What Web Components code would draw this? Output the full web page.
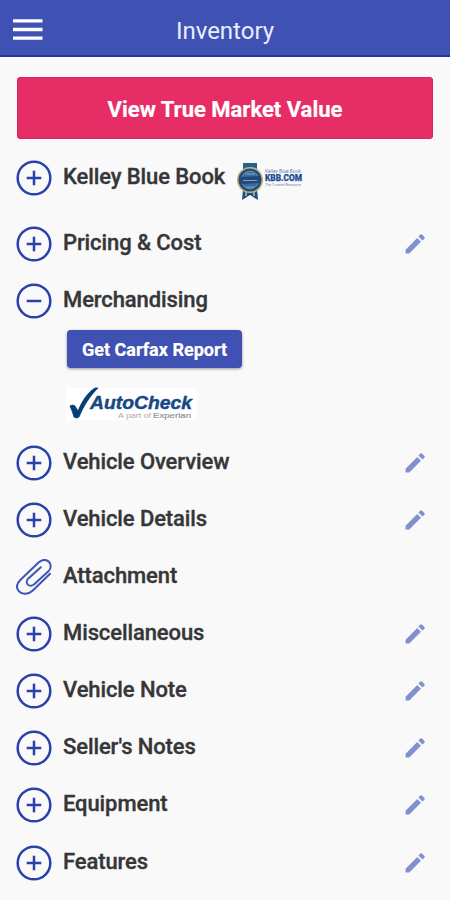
<!DOCTYPE html>
<html lang="en">
<head>
<meta charset="utf-8">
<title>Inventory</title>
<style>
html,body{margin:0;height:900px;overflow:hidden;background:#f9f9f9;font-family:Roboto,"Liberation Sans",sans-serif;color:#363638}
</style>
</head>
<body>
<inventory-page></inventory-page>
<script>
function define(name, html) {
  const t = document.createElement('template');
  t.innerHTML = html;
  customElements.define(name, class extends HTMLElement {
    constructor() {
      super();
      this.attachShadow({mode: 'open'}).append(t.content.cloneNode(true));
    }
  });
}

define('app-header', `<style>
:host{display:grid;grid-template-columns:60px 1fr 60px;align-items:center;height:57px;box-sizing:border-box;background:#3f51b2;border-bottom:2px solid #2635a0;color:#e9edff}
svg{display:block;margin:4px 0 0 12px}
h1{margin:6px 0 0;font-size:24px;line-height:28px;font-weight:400;text-align:center;white-space:nowrap}
</style><svg width="32" height="24" viewBox="0 0 32 24"><path d="M1 2.900H30.500M1 11.500H30.500M1 20.100H30.500" stroke="#fff" stroke-width="3.300"/></svg><h1><slot></slot></h1>`);

define('value-button', `<style>
:host{display:flex;align-items:center;justify-content:center;margin:20px 17px 6px;height:62px;box-sizing:border-box;padding-top:2px;border-radius:4px;background:#e72d66;box-shadow:inset 0 0 0 1px #e01f5d;color:#fff;font-size:22px;font-weight:700;white-space:nowrap;-webkit-text-stroke:.2px currentColor}
</style><span><slot></slot></span>`);

define('toggle-icon', `<style>
:host{display:block;width:36px;height:36px}
svg{display:block}
.clip,:host([kind=minus]) .v,:host([kind=clip]) .ring{display:none}
:host([kind=clip]) .clip{display:block}
</style><svg width="36" height="36" viewBox="0 0 36 36" fill="none" stroke="#2a41ac" stroke-width="2.500">
<g class="ring"><circle cx="18" cy="18" r="16.300"/><path d="M10.700 18H25.300"/><path class="v" d="M18 10.700V25.300"/></g>
<path class="clip" stroke-width="2" stroke="#3f55b5" stroke-linecap="round" stroke-linejoin="round" d="M34 14.800L16.800 31.500C12.700 35.500 6.200 36 3 32.300C0 28.800 .8 24.500 4.300 21L22.500 3.500C26 .3 30.300 .1 32.900 2.700C35.500 5.400 35.200 9.500 32.400 12.200L18.500 25C16.300 27 13.500 27.300 11.800 25.600C10.200 23.900 10.500 21.300 12.400 19.400L24.800 8.200"/></svg>`);

define('edit-icon', `<style>
:host{display:block;width:26px;height:26px}svg{display:block}
</style><svg width="26" height="26" viewBox="0 0 24 24" fill="#8290cd"><path d="M3.300 17.250V20.700h3.450L17.510 9.940l-3.450-3.450zM20.710 7.040a1 1 0 0 0 0-1.410l-2.340-2.340a1 1 0 0 0-1.410 0l-1.830 1.830 3.750 3.750 1.830-1.830z"/></svg>`);

define('inventory-row', `<style>
:host{display:flex;align-items:center;height:57.15px;padding:0 22px 0 16px;box-sizing:border-box}
:host([first]){height:66px;margin-bottom:4.400px}
h2{margin:0 0 2px 11px;font-size:22px;line-height:28px;font-weight:500;letter-spacing:-.1px;-webkit-text-stroke:.35px currentColor;white-space:nowrap}
:host([first]) h2{margin-bottom:3px}
slot[name=logo]{display:block;margin-left:11px}
slot[name=action]{display:block;margin-left:auto}
</style><slot name="icon"></slot><h2><slot></slot></h2><slot name="logo"></slot><slot name="action"></slot>`);

define('kbb-logo', `<style>
:host{display:block;margin-top:8px}svg{display:block}
</style><svg width="68" height="40" viewBox="0 0 68 40">
<path d="M7 1H21V12H7z" fill="#285f91"/><path d="M7 27L6 38L14 33L22 38L21 27z" fill="#234d76"/><path d="M10 30V34M18 30V34" stroke="#aebfc8" stroke-width="1.500"/>
<circle cx="14" cy="18" r="12.300" fill="#214e83" stroke="#c1b778" stroke-width="1.500"/>
<circle cx="14" cy="18" r="8.700" fill="#376ba0" stroke="#768e91" stroke-width="1"/>
<path d="M3 15L25 14V21L3 22z" fill="#214977"/><path d="M7 18.500H21M9 12H19M10 25H18" stroke="#83a4bd" stroke-width="1.200"/>
<g font-family="Roboto,Liberation Sans,sans-serif"><text x="29" y="11" font-size="5.200" textLength="36" lengthAdjust="spacingAndGlyphs" fill="#6484b4">Kelley Blue Book</text><text x="29" y="18.800" font-size="8.700" font-weight="900" textLength="37" lengthAdjust="spacingAndGlyphs" fill="#1f4c94" stroke="#1f4c94" stroke-width=".25">KBB.COM</text><text x="29" y="23.500" font-size="4" textLength="36" lengthAdjust="spacingAndGlyphs" fill="#6888b0">The Trusted Resource</text></g></svg>`);

define('auto-check', `<style>
:host{display:block;width:131px;height:32px;background:#fff}svg{display:block;overflow:visible}
</style><svg width="131" height="32" viewBox="0 0 131 32"><path d="M4 18Q7 16 9 18L12 23C16 13 22 4 29 0L32 0C24 8 18 17 13 29Q10 31 8 29Q6 22 4 18z" fill="#073d78" stroke="#073d78" stroke-width=".8"/>
<g font-family="Liberation Sans,sans-serif"><text x="24" y="21.300" font-size="17.500" font-style="italic" font-weight="700" textLength="102" lengthAdjust="spacingAndGlyphs" fill="#164884" stroke="#164884" stroke-width=".4">AutoCheck</text>
<text x="52" y="30.400" font-size="8" textLength="33" lengthAdjust="spacingAndGlyphs" fill="#aaa">A part of</text><text x="87" y="30.400" font-size="8" textLength="38" lengthAdjust="spacingAndGlyphs" fill="#929292" stroke="#929292" stroke-width=".2">Experian</text></g></svg>`);

define('merch-panel', `<style>
:host{display:flex;flex-direction:column;align-items:flex-start;gap:20.300px;height:104.300px;padding-left:66px;box-sizing:border-box}
button{margin:0 0 0 1px;width:175px;height:38px;border:0;border-radius:4px;background:#3f51b2;box-shadow:0 1px 3px #0006;color:#fff;font:700 18px Roboto,sans-serif;padding:2px 0 0;white-space:nowrap;-webkit-text-stroke:.2px currentColor}
</style><button>Get Carfax Report</button><auto-check></auto-check>`);

const rows = ['Kelley Blue Book','Pricing & Cost','Merchandising','Vehicle Overview','Vehicle Details','Attachment','Miscellaneous','Vehicle Note',"Seller's Notes",'Equipment','Features'];
const noEdit = new Set(['Kelley Blue Book','Merchandising','Attachment']);
const kinds = {Merchandising: 'minus', Attachment: 'clip'};
define('inventory-page', `<style>:host{display:block;height:900px;overflow:hidden}</style><app-header>Inventory</app-header><value-button>View True Market Value</value-button>` +
  rows.map((r, i) => `<inventory-row${i ? '' : ' first'}><toggle-icon slot="icon" kind="${kinds[r] || 'plus'}"></toggle-icon>${r.replace('&', '&amp;')}${i ? '' : '<kbb-logo slot="logo"></kbb-logo>'}${noEdit.has(r) ? '' : '<edit-icon slot="action"></edit-icon>'}</inventory-row>${r === 'Merchandising' ? '<merch-panel></merch-panel>' : ''}`).join(''));
</script>
</body>
</html>
